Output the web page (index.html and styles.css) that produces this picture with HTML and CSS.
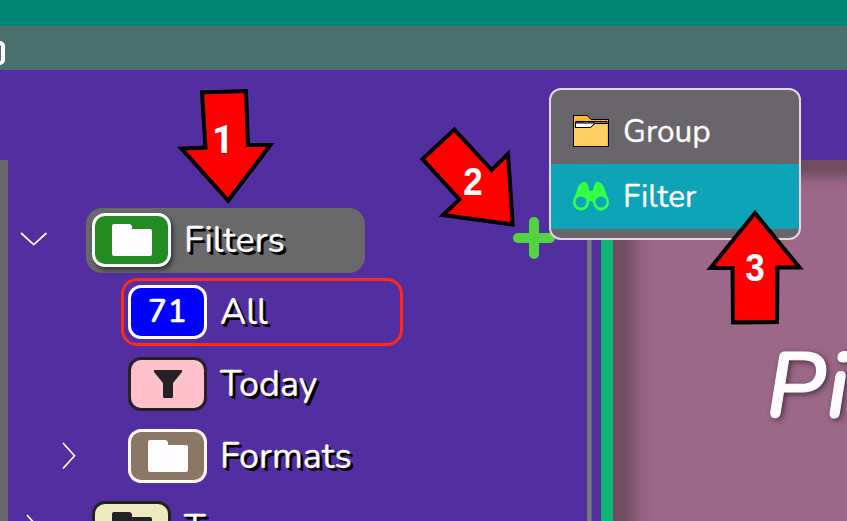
FILE: index.html
```html
<!DOCTYPE html>
<html lang="en">
<head>
<meta charset="utf-8">
<title>Filters</title>
<link rel="stylesheet" href="styles.css">
</head>
<body>
<svg class="defs" width="0" height="0" aria-hidden="true">
  <symbol id="folder" viewBox="0 0 40 32"><path d="M0 2Q0 0 2 0H18L20 2V5H38Q40 5 40 7V30Q40 32 38 32H2Q0 32 0 30Z"/></symbol>
  <symbol id="funnel" viewBox="0 0 28 28"><path d="M0 0H28V2L19 13V26.500Q19 28 17.500 28H10.500Q9 28 9 26.500V13L0 2Z"/></symbol>
</svg>
<div class="titlebar"></div>
<div class="toolbar"><span class="tool"></span></div>
<div class="header"></div>
<main class="main">
  <div class="edge"></div>
  <nav class="tree">
    <div class="row">
      <svg class="chevron" viewBox="0 0 28 14"><path d="M1 1L13.700 12.700L26.500 1"/></svg>
      <div class="item selected"><span class="badge green"><svg class="fold"><use href="#folder"/></svg></span><span class="label filters">Filters</span></div>
    </div>
    <div class="row child">
      <div class="item current"><span class="badge blue">71</span><span class="label all">All</span></div>
    </div>
    <div class="row child">
      <div class="item"><span class="badge pink dark"><svg class="fun"><use href="#funnel"/></svg></span><span class="label today">Today</span></div>
    </div>
    <div class="row child">
      <svg class="chevron right" viewBox="0 0 14 28"><path d="M1 1L12.500 13.800L1 26.500"/></svg>
      <div class="item"><span class="badge brown"><svg class="fold"><use href="#folder"/></svg></span><span class="label formats">Formats</span></div>
    </div>
    <div class="row">
      <svg class="chevron right" viewBox="0 0 14 28"><path d="M1 1L12.500 13.800L1 26.500"/></svg>
      <div class="item"><span class="badge cream dark"><svg class="fold"><use href="#folder"/></svg></span><span class="label types">T</span></div>
    </div>
  </nav>
  <div class="splitter"></div>
  <section class="content"><h1>Pi</h1></section>
</main>
<svg class="plus" viewBox="0 0 42 42"><path d="M21 5V37M5 21H37"/></svg>
<div class="menu">
  <div class="option">
    <svg class="micon" viewBox="0 0 36 32"><path d="M.5 .5H14.500L18 4.500H35.500V31.500H.5Z" fill="#ffb52c" stroke="#000"/><path d="M2.500 6.500H34V8H2.500Z" fill="#c9ffff" stroke="#000"/><path d="M2.500 8H22L17.500 12.500H2.500Z" fill="#fff" stroke="#000"/><path d="M1 13H18L22 9H34V31H1Z" fill="#ffcf66"/><path d="M2 12.500H17.500L22 8.500H35" fill="none" stroke="#000"/><path d="M.5 .5V31.500H35.500V4.500" fill="none" stroke="#000"/></svg>
    <span class="group">Group</span>
  </div>
  <div class="option active">
    <svg class="micon" viewBox="0 0 36 28"><path d="M2 14L5 5Q7 1 10 0H13Q15 2 16 8Q18 10 20 8Q21 2 23 0H26Q29 1 31 5L34 14Q36 17 36 20A8 8 0 0 1 20 21L19 19H17L16 21A8 8 0 0 1 0 20Q0 17 2 14Z" fill="#33ff47"/><circle cx="8" cy="20" r="5.500" fill="#0da4b8"/><circle cx="28" cy="20" r="5.500" fill="#0da4b8"/></svg>
    <span class="filter">Filter</span>
  </div>
</div>
<svg class="notes" viewBox="0 0 847 521">
  <path d="M202 92.500L246 91L248 145H270.500L228.200 200.500L181.500 148.500L205.500 147.500Z"/>
  <path d="M454.300 129.500L491.700 170L508 154L512.700 224.500L443 215L459.500 199.500L422.500 159Z"/>
  <path d="M755 213L799.500 267.500H777.500L777 322L733 322.500L732.500 268H710.500Z"/>
  <text class="one" x="223" y="153">1</text>
  <text x="473" y="195" textLength="19.500" lengthAdjust="spacingAndGlyphs">2</text>
  <text x="755" y="281" textLength="19.500" lengthAdjust="spacingAndGlyphs">3</text>
</svg>
</body>
</html>
```
FILE: styles.css
```css
* { box-sizing: border-box; }
body { margin: 0; width: 847px; height: 521px; overflow: hidden; position: relative; display: flex; flex-direction: column; background: #522ea1; color: #fffcff; font-family: Nunito, "Noto Sans", sans-serif; }
svg { display: block; }
.defs { position: absolute; }
.titlebar { height: 26px; flex: none; background: #008575; }
.toolbar { height: 44px; flex: none; background: #49706c; padding-top: 15px; overflow: hidden; }
.tool { display: block; width: 17px; height: 24px; margin-left: -12px; border: 4px solid #fffcff; border-radius: 5px; }
.header { height: 90px; flex: none; }
.main { display: flex; height: 361px; }
.edge { width: 8px; background: #69666b; }
.tree { width: 579px; padding-top: 44px; overflow: hidden; }
.row { display: flex; align-items: center; height: 72px; padding-left: 12px; }
.child { padding-left: 48px; }
.chevron { width: 28px; height: 14px; margin-top: -3px; fill: none; stroke: #fffcff; stroke-width: 1.7; flex: none; }
.right { width: 14px; height: 28px; margin: -1px 8px 0 6px; }
.item { display: flex; align-items: center; height: 65px; width: 279px; margin-left: 38px; padding-left: 6px; border-radius: 16px; }
.child .item { margin-left: 65px; width: 282px; height: 68px; padding-left: 7px; }
.child .chevron + .item { margin-left: 37px; }
.selected { background: #696969; }
.child .current { border: 3px solid #ff2b18; padding-left: 4px; }
.badge { width: 79px; height: 54px; flex: none; display: flex; align-items: center; justify-content: center; border: 3px solid #fffcff; border-radius: 13px; color: #fffcff; fill: #fffcff; font-size: 31.5px; font-weight: 600; letter-spacing: .6px; line-height: 40px; }
.dark { border-color: #252125; fill: #252125; }
.green { background: #228b22; box-shadow: 2px 3px 5px #0008; }
.blue { background: #00f; -webkit-text-stroke: .4px #fffcff; }
.pink { background: #ffc0cb; }
.brown { background: #8b7765; }
.cream { background: #eee8bf; }
.fold { width: 40px; height: 32px; }
.fun { width: 28px; height: 28px; }
.label { font-size: 36px; line-height: 50px; margin: 1px 0 0 13px; text-shadow: 1.5px 1.5px #000, 3px 3px #000; white-space: nowrap; -webkit-text-stroke: .35px #fffcff; }
.splitter { width: 26px; background: linear-gradient(90deg, #777 4px, #666075 4px 5px, #522ea1 5px 14px, #0eb676 14px); }
.content { width: 234px; overflow: hidden; background: linear-gradient(90deg, #704c60 12px, #845a73 22px, #946381 29px, #9b688700 40px), linear-gradient(#704c60 10px, #845a73 17px, #946381 22px, #9b6887 30px); }
h1 { margin: 167px 0 0 153px; font-size: 92px; line-height: 120px; font-style: italic; font-weight: 600; letter-spacing: 1.5px; -webkit-text-stroke: 1px #fffcff; text-shadow: 2px 2px 6px #0009; }
.plus { position: absolute; left: 513px; top: 217px; width: 42px; height: 42px; fill: none; stroke: #53d33f; stroke-width: 10; stroke-linecap: round; }
.menu { position: absolute; left: 549px; top: 88px; width: 252px; height: 152px; padding-top: 9px; border: 2px solid #e2d7e6; border-radius: 12px; background: #69666b; }
.option { display: flex; align-items: center; height: 65px; padding-left: 22px; gap: 14px; font-size: 31.6px; line-height: 44px; -webkit-text-stroke: .3px #fffcff; }
.active { background: #0da4b8; }
.micon { width: 36px; height: 32px; margin-top: -2px; flex: none; }
.notes { position: absolute; left: 0; top: 0; width: 847px; height: 521px; }
.notes path { fill: #f00; stroke: #000; stroke-width: 4; }
.notes text { fill: #fff; font: bold 38px "Liberation Sans", sans-serif; text-anchor: middle; }
.notes .one { font-family: Roboto, sans-serif; font-size: 38px; }
```
